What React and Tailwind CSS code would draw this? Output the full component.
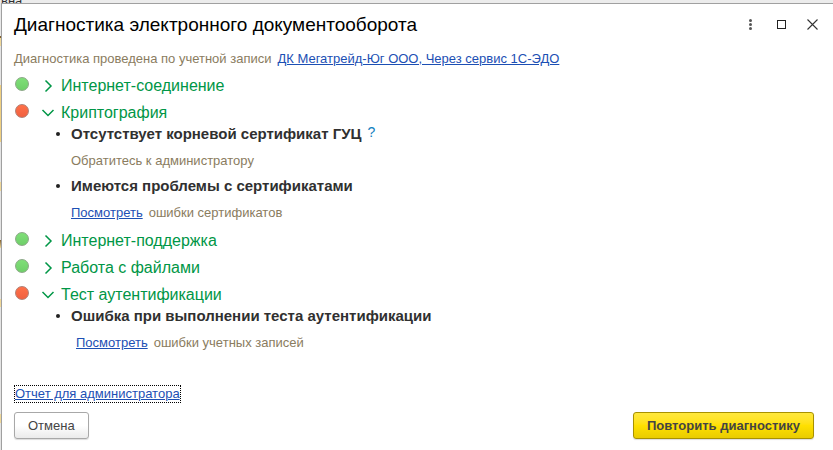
import React from "react";

const sections = [
  { title: "Интернет-соединение", ok: true },
  {
    title: "Криптография",
    ok: false,
    issues: [
      { title: "Отсутствует корневой сертификат ГУЦ", help: true, note: "Обратитесь к администратору" },
      { title: "Имеются проблемы с сертификатами", link: "Посмотреть", note: "ошибки сертификатов" },
    ],
  },
  { title: "Интернет-поддержка", ok: true },
  { title: "Работа с файлами", ok: true },
  {
    title: "Тест аутентификации",
    ok: false,
    issues: [
      { title: "Ошибка при выполнении теста аутентификации", link: "Посмотреть", note: "ошибки учетных записей", indent: true },
    ],
  },
];

const linkClass = "text-[#1c4fb4] underline underline-offset-1";

function Status({ ok }) {
  return (
    <span className="flex w-4 shrink-0 justify-center pb-1">
      <span
        role="img"
        aria-label={ok ? "Успешно" : "Ошибка"}
        className={
          "size-[14px] rounded-full border " +
          (ok
            ? "border-[#8ba886] bg-linear-to-b from-[#7fdf78] to-[#6fcf69]"
            : "border-[#b07f74] bg-linear-to-b from-[#ff7048] to-[#f06040]")
        }
      />
    </span>
  );
}

function Chevron({ open }) {
  return (
    <svg width="14" height="14" viewBox="0 0 14 14" fill="none" stroke="#009646" strokeWidth="1.5" aria-hidden="true">
      <path d={open ? "M1.5 4 L7 9.5 L12.5 4" : "M4.5 1.5 L10 7 L4.5 12.5"} />
    </svg>
  );
}

function Issue({ issue }) {
  return (
    <li>
      <div className="flex h-4 items-center">
        <span className="mr-[11px] size-1 rounded-full bg-[#222]" />
        <strong className="text-[15px] leading-4 font-bold text-[#303030]">{issue.title}</strong>
        {issue.help && (
          <button type="button" aria-label="Справка" className="ml-1.5 pb-1 text-[14px] leading-4 text-[#1080c0]">
            ?
          </button>
        )}
      </div>
      <p className={"mt-[9px] flex h-5 items-center gap-1.5 " + (issue.indent ? "pl-5" : "pl-[15px]")}>
        {issue.link && <a href="#errors" className={linkClass}>{issue.link}</a>}
        <span>{issue.note}</span>
      </p>
    </li>
  );
}

function Section({ section }) {
  const open = Boolean(section.issues);
  return (
    <section>
      <h2 className="flex h-[27px] items-center">
        <Status ok={section.ok} />
        <button type="button" aria-expanded={open} className="ml-[11px] flex items-center gap-1.5 text-[16px] leading-5 text-[#009646]">
          <Chevron open={open} />
          {section.title}
        </button>
      </h2>
      {open && (
        <ul className="flex flex-col gap-[7px] pb-1 pl-[42px]">
          {section.issues.map((issue) => (
            <Issue key={issue.title} issue={issue} />
          ))}
        </ul>
      )}
    </section>
  );
}

export default function App() {
  return (
    <div className="flex min-h-screen flex-col bg-[linear-gradient(#e8e8e8_36px,#806030_36px,#806030_38px,#f0d898_38px,#f0d898_46px,#e4e4e4_46px,#e4e4e4_85px,#f0d080_85px,#f0d080_142px,#e4e4e4_142px,#e4e4e4_182px,#f0d898_182px,#f0d898_191px,#e4e4e4_191px,#e4e4e4_240px,#806030_240px,#f0d898_248px,#e4e4e4_248px,#e4e4e4_299px,#f0d898_299px,#f0d898_307px,#e4e4e4_307px,#e4e4e4_414px,#f0d898_414px,#f0d898_423px,#e4e4e4_423px)] font-['Liberation_Sans',Arial,sans-serif] text-[13px] leading-5 text-[#8a7c60]">
      <div className="flex h-[3px] items-end overflow-hidden bg-[#ececec] pl-px text-[13px] leading-[4px] text-[#303030]">вна</div>
      <main role="dialog" aria-labelledby="title" className="ml-px flex grow flex-col border-t border-l border-[#a0a0a0] bg-white pr-[19px] pl-3">
        <header className="flex h-[41px] items-center justify-between">
          <h1 id="title" className="text-[19px] leading-6 text-black">Диагностика электронного документооборота</h1>
          <div className="-mr-1.5 flex items-center gap-4">
            <button type="button" aria-label="Ещё" className="flex size-[15px] items-center justify-center">
              <svg width="15" height="15" viewBox="0 0 15 15" fill="#555" aria-hidden="true">
                <circle cx="7.5" cy="3.5" r="1.5" /><circle cx="7.5" cy="7.5" r="1.5" /><circle cx="7.5" cy="11.5" r="1.5" />
              </svg>
            </button>
            <button type="button" aria-label="Развернуть" className="size-[15px]">
              <svg width="15" height="15" viewBox="0 0 15 15" fill="none" stroke="#222" aria-hidden="true">
                <rect x="3.5" y="3.5" width="8" height="8" />
              </svg>
            </button>
            <button type="button" aria-label="Закрыть" className="size-[15px]">
              <svg width="15" height="15" viewBox="0 0 15 15" fill="none" stroke="#333" strokeWidth="1.1" aria-hidden="true">
                <path d="M2.5 2.5 L12.5 12.5 M12.5 2.5 L2.5 12.5" />
              </svg>
            </button>
          </div>
        </header>
        <p className="flex h-[27px] items-center gap-1.5">
          <span>Диагностика проведена по учетной записи</span>
          <a href="#account" className={linkClass}>ДК Мегатрейд-Юг ООО, Через сервис 1С-ЭДО</a>
        </p>
        {sections.map((section) => (
          <Section key={section.title} section={section} />
        ))}
        <footer className="mt-7">
          <a href="#report" className={"block w-fit border border-dotted border-black leading-4 " + linkClass}>Отчет для администратора</a>
          <div className="mt-[9px] flex justify-between">
            <button type="button" className="h-[27px] rounded-[3px] border border-[#a8a8a8] bg-linear-to-b from-white via-white to-[#ebebeb] px-[13px] text-[13px] text-[#444] shadow-[0_1px_1px_#ddd]">Отмена</button>
            <button type="button" className="h-[27px] rounded-[3px] border border-[#a89100] bg-linear-to-b from-[#ffe83c] via-[#ffe000] to-[#e9cc00] px-[13px] text-[13px] font-bold text-[#444] shadow-[0_1px_1px_#ddd]">Повторить диагностику</button>
          </div>
        </footer>
      </main>
    </div>
  );
}
